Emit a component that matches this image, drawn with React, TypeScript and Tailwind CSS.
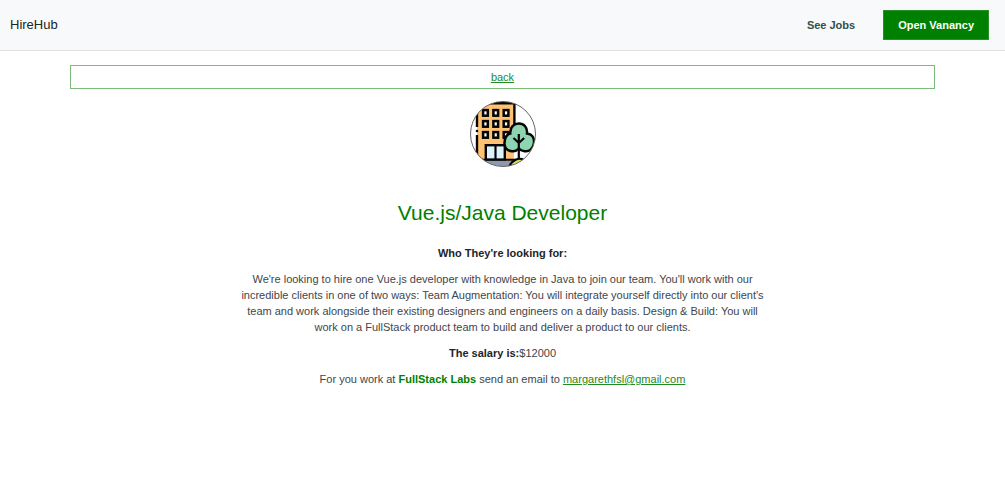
function BuildingLogo() {
  return (
    <svg viewBox="0 0 66 66" className="block size-full" role="img" aria-label="Company building">
      <defs>
        <clipPath id="badge">
          <circle cx="33" cy="33" r="32.5" />
        </clipPath>
      </defs>
      <g clipPath="url(#badge)">
        <rect width="66" height="66" fill="#fff" />
        <rect x="7" y="2" width="37" height="58" fill="#ffc273" />
        <path d="M7 5V26M7 34V54M44.4 0V24M5 2.2H46" stroke="#050505" strokeWidth="2.4" fill="none" />
        <circle cx="7" cy="30" r="1.3" fill="#050505" />
        <g fill="#fff" stroke="#050505" strokeWidth="2.5">
          <rect x="13.1" y="9.1" width="4.7" height="5.6" />
          <rect x="23.4" y="9.1" width="4.7" height="5.6" />
          <rect x="33.7" y="9.1" width="4.7" height="5.6" />
          <rect x="13.1" y="20.1" width="4.7" height="5.6" />
          <rect x="23.4" y="20.1" width="4.7" height="5.6" />
          <rect x="33.7" y="20.1" width="4.7" height="5.6" />
          <rect x="13.1" y="31.1" width="4.7" height="5.6" />
          <rect x="23.4" y="31.1" width="4.7" height="5.6" />
          <rect x="33.7" y="31.1" width="4.7" height="5.6" />
        </g>
        <rect x="15.8" y="44.2" width="19" height="14.5" fill="#ddf3fb" stroke="#050505" strokeWidth="2.4" />
        <path d="M25.5 44V59" stroke="#050505" strokeWidth="2.2" />
        <rect x="4" y="59.5" width="38" height="7" fill="#8e99ad" />
        <path d="M8 58.8H58" stroke="#050505" strokeWidth="2" />
        <path d="M39 66C42 59 49 56 54 59L58 66Z" fill="#d8df67" stroke="#050505" strokeWidth="2" />
        <path
          d="M40.3 32.5C39.8 26 44 22.6 48.8 22.6C54 22.6 57.7 26.5 57 32.5C62 33 64.4 37 64 42C63.3 48 59 51 54.5 50.2C51.8 50 50 49 48.8 47.5C47 49.5 44.5 50.6 42 50.2C37 50 34.3 46.5 34.5 42C34.7 36.5 37 33.3 40.3 32.5Z"
          fill="#8ed5b2"
          stroke="#050505"
          strokeWidth="2.5"
        />
        <path d="M48.8 33V57M48.8 42L43.5 37M48.8 42L54.2 37" stroke="#050505" strokeWidth="2.2" fill="none" />
      </g>
      <circle cx="33" cy="33" r="32.5" fill="none" stroke="#666" />
    </svg>
  );
}

export default function App() {
  return (
    <div className="min-h-screen bg-white font-['Liberation_Sans',Arial,sans-serif] text-[11px] leading-4 text-[#41464b]">
      <header className="flex items-center justify-between border-b border-[#dee2e3] bg-[#f8f9fb] py-2.5 pr-4 pl-2.5">
        <a href="#home" className="text-[13px] text-[#212529]">HireHub</a>
        <nav className="flex items-center gap-7">
          <a href="#jobs" className="font-bold text-[#2f4f4f]">See Jobs</a>
          <button type="button" className="h-[30px] border border-[#279027] bg-[#008000] px-3.5 font-bold text-white">
            Open Vanancy
          </button>
        </nav>
      </header>

      <main className="px-[7%] pt-3.5 text-center">
        <div className="border border-[#7aba7a] py-[3px]">
          <a href="#back" className="text-[#228b22] underline">back</a>
        </div>
        <div className="mx-auto mt-3 size-[66px]">
          <BuildingLogo />
        </div>
        <h1 className="mt-8 text-[21px] leading-7 text-[#008000]">Vue.js/Java Developer</h1>
        <div className="mx-auto mt-[18px] flex max-w-[532px] flex-col gap-2.5">
          <h2 className="font-bold text-[#212529]">Who They're looking for:</h2>
          <p>
            We're looking to hire one Vue.js developer with knowledge in Java to join our team. You'll work with our
            incredible clients in one of two ways: Team Augmentation: You will integrate yourself directly into our
            client's team and work alongside their existing designers and engineers on a daily basis. Design &amp; Build:
            You will work on a FullStack product team to build and deliver a product to our clients.
          </p>
          <p>
            <strong className="text-[#212529]">The salary is:</strong>$12000
          </p>
          <p>
            For you work at <strong className="text-[#008000]">FullStack Labs</strong> send an email to{" "}
            <a href="mailto:margarethfsl@gmail.com" className="text-[#228b22] underline">margarethfsl@gmail.com</a>
          </p>
        </div>
      </main>
    </div>
  );
}
